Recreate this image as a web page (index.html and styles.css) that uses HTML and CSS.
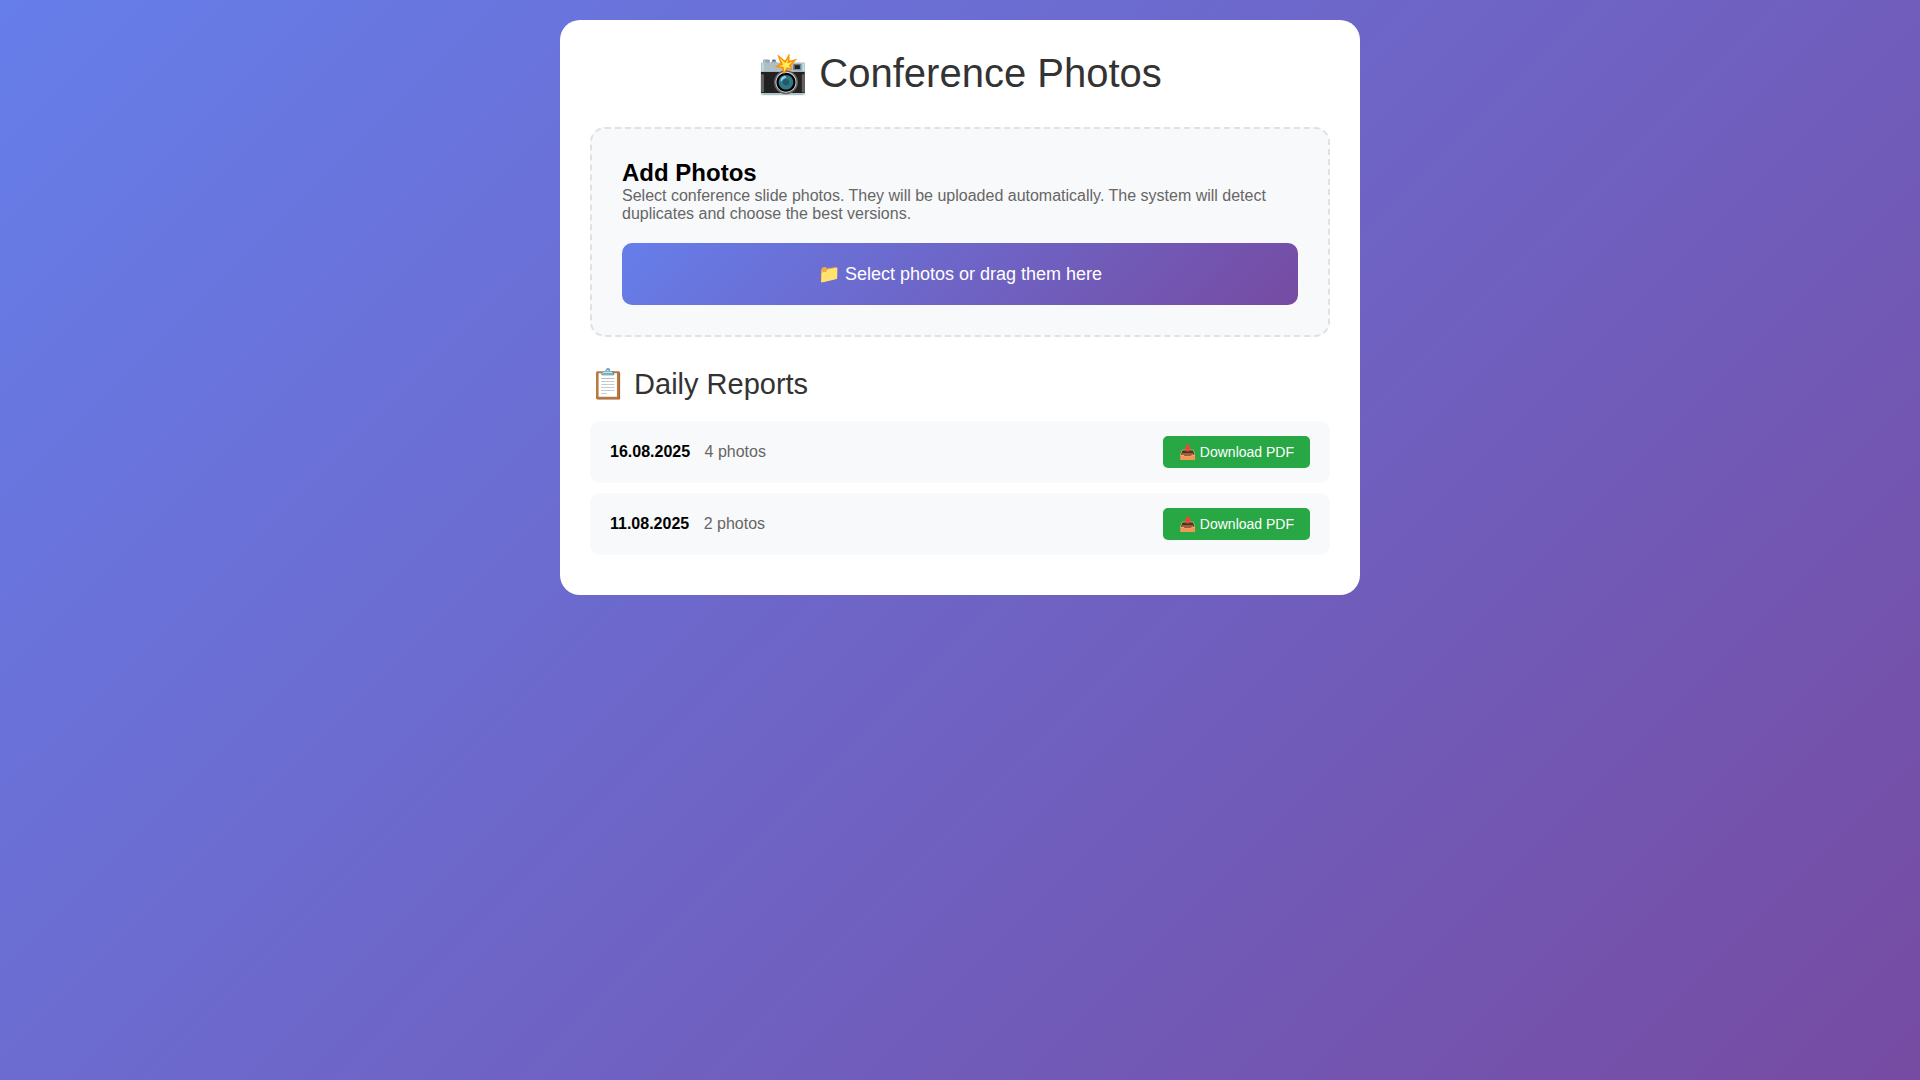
FILE: index.html
```html
<!DOCTYPE html>
<html lang="en">

<head>
    <meta charset="UTF-8">
    <meta name="viewport" content="width=device-width, initial-scale=1.0">
    <title>Conference Photos</title>
    <link rel="stylesheet" href="styles.css">
</head>

<body>
    <main class="container">
        <h1>📸 Conference Photos</h1>

        <section class="upload-section">
            <h2>Add Photos</h2>
            <p>Select conference slide photos. They will be uploaded automatically. The system will detect duplicates and choose the best versions.</p>
            <button type="button" class="upload-btn">📁 Select photos or drag them here</button>
        </section>

        <section class="reports-section">
            <h2>📋 Daily Reports</h2>
            <div class="report-item">
                <div class="report-info">
                    <strong>16.08.2025</strong>
                    <span class="photo-count">4 photos</span>
                </div>
                <a href="#" class="download-btn">📥 Download PDF</a>
            </div>
            <div class="report-item">
                <div class="report-info">
                    <strong>11.08.2025</strong>
                    <span class="photo-count">2 photos</span>
                </div>
                <a href="#" class="download-btn">📥 Download PDF</a>
            </div>
        </section>
    </main>
</body>

</html>
```
FILE: styles.css
```css
* {
    margin: 0;
    padding: 0;
    box-sizing: border-box;
}

body {
    font-family: "Liberation Sans", Arial, sans-serif;
    background: linear-gradient(135deg, #667eea 0%, #764ba2 100%);
    min-height: 100vh;
    padding: 20px;
}

.container {
    max-width: 800px;
    margin: 0 auto;
    padding: 30px;
    background: white;
    border-radius: 20px;
}

h1 {
    margin-bottom: 30px;
    color: #333;
    font-size: 40px;
    font-weight: 300;
    text-align: center;
}

/* Upload area */
.upload-section {
    margin-bottom: 30px;
    padding: 30px;
    background: #f8f9fa;
    border: 2px dashed #dee2e6;
    border-radius: 15px;
}

.upload-section p {
    margin-bottom: 20px;
    color: #666;
}

.upload-btn {
    display: block;
    width: 100%;
    padding: 20px;
    background: linear-gradient(135deg, #667eea 0%, #764ba2 100%);
    border: none;
    border-radius: 10px;
    color: white;
    font-family: inherit;
    font-size: 18px;
    cursor: pointer;
}

/* Daily reports */
.reports-section h2 {
    margin-bottom: 20px;
    color: #333;
    font-size: 29px;
    font-weight: 300;
}

.report-item {
    display: flex;
    justify-content: space-between;
    align-items: center;
    margin-bottom: 10px;
    padding: 15px 20px;
    background: #f8f9fa;
    border-radius: 10px;
}

.photo-count {
    margin-left: 10px;
    color: #666;
}

.download-btn {
    padding: 8px 16px;
    background: #28a745;
    border-radius: 5px;
    color: white;
    font-size: 14px;
    text-decoration: none;
}
```
